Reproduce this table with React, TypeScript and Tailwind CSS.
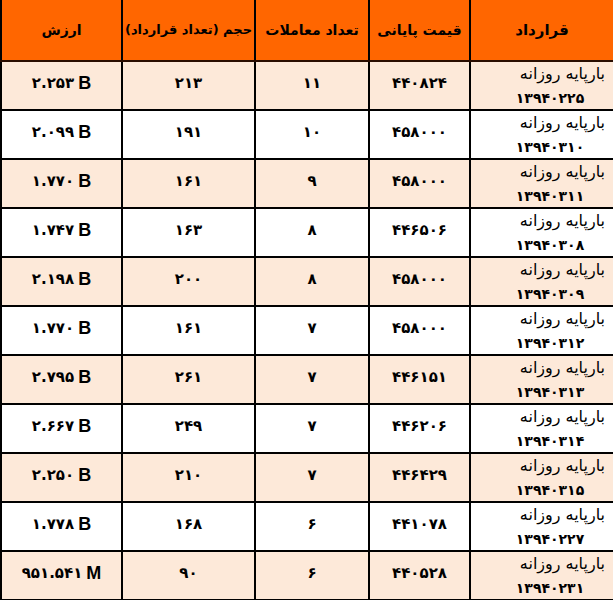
const rows = [
  { value: '۲.۲۵۳', unit: 'B', volume: '۲۱۳', count: '۱۱', price: '۴۴۰۸۲۴', date: '۱۳۹۴۰۲۲۵' },
  { value: '۲.۰۹۹', unit: 'B', volume: '۱۹۱', count: '۱۰', price: '۴۵۸۰۰۰', date: '۱۳۹۴۰۳۱۰' },
  { value: '۱.۷۷۰', unit: 'B', volume: '۱۶۱', count: '۹', price: '۴۵۸۰۰۰', date: '۱۳۹۴۰۳۱۱' },
  { value: '۱.۷۴۷', unit: 'B', volume: '۱۶۳', count: '۸', price: '۴۴۶۵۰۶', date: '۱۳۹۴۰۳۰۸' },
  { value: '۲.۱۹۸', unit: 'B', volume: '۲۰۰', count: '۸', price: '۴۵۸۰۰۰', date: '۱۳۹۴۰۳۰۹' },
  { value: '۱.۷۷۰', unit: 'B', volume: '۱۶۱', count: '۷', price: '۴۵۸۰۰۰', date: '۱۳۹۴۰۳۱۲' },
  { value: '۲.۷۹۵', unit: 'B', volume: '۲۶۱', count: '۷', price: '۴۴۶۱۵۱', date: '۱۳۹۴۰۳۱۳' },
  { value: '۲.۶۶۷', unit: 'B', volume: '۲۴۹', count: '۷', price: '۴۴۶۲۰۶', date: '۱۳۹۴۰۳۱۴' },
  { value: '۲.۲۵۰', unit: 'B', volume: '۲۱۰', count: '۷', price: '۴۴۶۴۲۹', date: '۱۳۹۴۰۳۱۵' },
  { value: '۱.۷۷۸', unit: 'B', volume: '۱۶۸', count: '۶', price: '۴۴۱۰۷۸', date: '۱۳۹۴۰۲۲۷' },
  { value: '۹۵۱.۵۴۱', unit: 'M', volume: '۹۰', count: '۶', price: '۴۴۰۵۲۸', date: '۱۳۹۴۰۲۳۱' },
]

// column widths, right to left: contract, price, trades, volume, value
const cols = 'grid-cols-[144px_101px_114px_133px_121px]'

export default function App() {
  return (
    <div
      dir="rtl"
      className="w-[613px] h-[600px] overflow-hidden bg-white text-black font-['DejaVu_Sans',sans-serif]"
    >
      <div className={`grid ${cols} h-[62px] bg-[#ff6600] border-b-2 border-[#2a0d00] text-[14px] font-bold`}>
        <div className="flex items-center justify-center border-l-2 border-black text-[15px]">قرارداد</div>
        <div className="flex items-center justify-center border-l-2 border-black">قیمت پایانی</div>
        <div className="flex items-center justify-center border-l-2 border-black">تعداد معاملات</div>
        <div className="flex items-center justify-center border-l-2 border-black text-[13px] whitespace-nowrap">
          حجم (تعداد قرارداد)
        </div>
        <div className="flex items-center justify-center border-l-2 border-black">ارزش</div>
      </div>

      {rows.map((r, i) => (
        <div
          key={i}
          className={`grid ${cols} h-[49px] border-b-2 border-black ${i % 2 === 0 ? 'bg-[#fde9d9]' : 'bg-white'}`}
        >
          <div className="flex flex-col justify-between border-l-2 border-black pt-0.5">
            <span className="pr-2 text-right text-[16px] leading-[20px]">بارپایه روزانه</span>
            <span className="pl-4 text-center text-[14px] font-bold leading-[22px]">{r.date}</span>
          </div>
          <div className="flex items-center justify-center border-l-2 border-black pb-1 text-[15px] font-bold">
            {r.price}
          </div>
          <div className="flex items-center justify-center border-l-2 border-black pb-1 text-[15px] font-bold">
            {r.count}
          </div>
          <div className="flex items-center justify-center border-l-2 border-black pb-1 text-[15px] font-bold">
            {r.volume}
          </div>
          <div dir="ltr" className="flex items-center justify-center gap-1 border-l-2 border-black pb-1">
            <span className="text-[15px] font-bold">{r.value}</span>
            <span className="font-['Liberation_Sans',sans-serif] text-[18px] font-bold">{r.unit}</span>
          </div>
        </div>
      ))}
    </div>
  )
}
